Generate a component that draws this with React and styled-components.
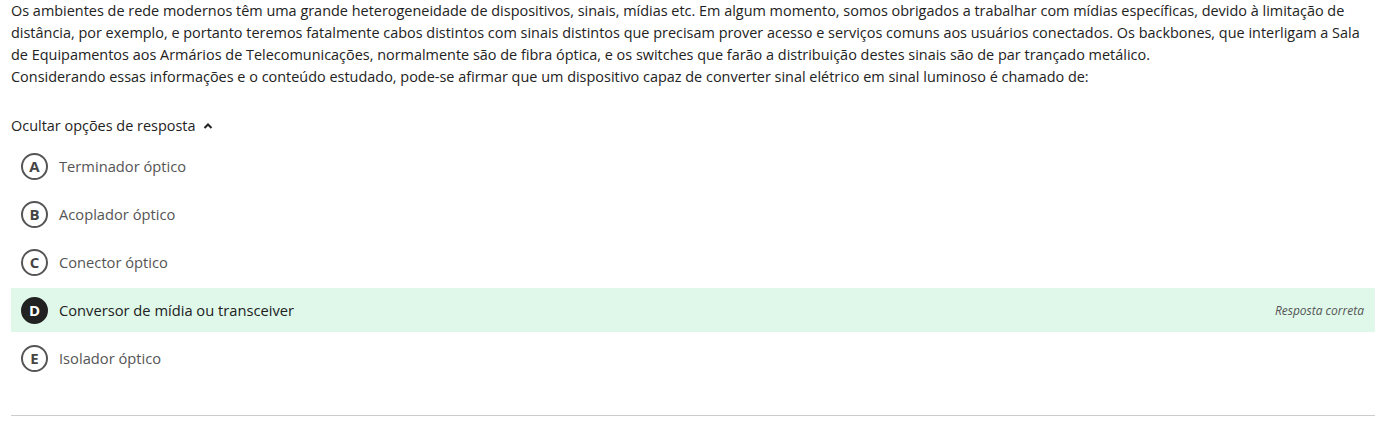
import React from "react";
import styled, { createGlobalStyle } from "styled-components";

const GlobalStyle = createGlobalStyle`
  body {
    margin: 0;
    background: #fff;
    font-family: "Open Sans", "Liberation Sans", sans-serif;
  }
`;

const options = [
  { letter: "A", text: "Terminador óptico" },
  { letter: "B", text: "Acoplador óptico" },
  { letter: "C", text: "Conector óptico" },
  { letter: "D", text: "Conversor de mídia ou transceiver", correct: true },
  { letter: "E", text: "Isolador óptico" },
];

const App = () => {
  return (
    <Page>
      <GlobalStyle />
      <Question>
        Os ambientes de rede modernos têm uma grande heterogeneidade de dispositivos, sinais, mídias etc. Em algum momento, somos obrigados a trabalhar com mídias específicas, devido à limitação de distância, por exemplo, e portanto teremos fatalmente cabos distintos com sinais distintos que precisam prover acesso e serviços comuns aos usuários conectados. Os backbones, que interligam a Sala de Equipamentos aos Armários de Telecomunicações, normalmente são de fibra óptica, e os switches que farão a distribuição destes sinais são de par trançado metálico.
        <br />
        Considerando essas informações e o conteúdo estudado, pode-se afirmar que um dispositivo capaz de converter sinal elétrico em sinal luminoso é chamado de:
      </Question>
      <Toggle>
        Ocultar opções de resposta
        <svg width="10" height="10" viewBox="0 0 10 10">
          <path d="M1.5 7 L5 3.5 L8.5 7" fill="none" stroke="#222" strokeWidth="2" />
        </svg>
      </Toggle>
      <OptionList>
        {options.map((o) => (
          <Option key={o.letter} correct={o.correct}>
            <Letter filled={o.correct}>{o.letter}</Letter>
            <OptionText correct={o.correct}>{o.text}</OptionText>
            {o.correct && <Feedback>Resposta correta</Feedback>}
          </Option>
        ))}
      </OptionList>
      <Divider />
    </Page>
  );
};

export default App;

const Page = styled.main`
  padding: 0 14px 0 11px;
`;

const Question = styled.p`
  margin: 0;
  font-size: 14.45px;
  line-height: 22px;
  color: #222;
`;

const Toggle = styled.div`
  display: flex;
  align-items: center;
  gap: 8px;
  margin-top: 27px;
  font-size: 14.45px;
  line-height: 22px;
  color: #222;
`;

const OptionList = styled.div`
  display: flex;
  flex-direction: column;
  gap: 4px;
  margin-top: 7px;
`;

const Option = styled.div`
  display: flex;
  align-items: center;
  height: 44px;
  padding: 0 11px 0 10px;
  background: ${(p) => (p.correct ? "#dff8ea" : "transparent")};
`;

const Letter = styled.span`
  box-sizing: border-box;
  width: 27px;
  height: 27px;
  border-radius: 50%;
  border: 2px solid ${(p) => (p.filled ? "#222" : "#555")};
  background: ${(p) => (p.filled ? "#222" : "transparent")};
  color: ${(p) => (p.filled ? "#fff" : "#444")};
  display: flex;
  align-items: center;
  justify-content: center;
  font-size: 15px;
  font-weight: 700;
  flex-shrink: 0;
`;

const OptionText = styled.span`
  margin-left: 11px;
  font-size: 14.7px;
  font-weight: 500;
  color: ${(p) => (p.correct ? "#222" : "#555")};
`;

const Feedback = styled.span`
  margin-left: auto;
  font-size: 12px;
  font-style: italic;
  color: #555;
`;

const Divider = styled.hr`
  margin: 35px 0 0;
  border: none;
  border-top: 1px solid #ccc;
`;
